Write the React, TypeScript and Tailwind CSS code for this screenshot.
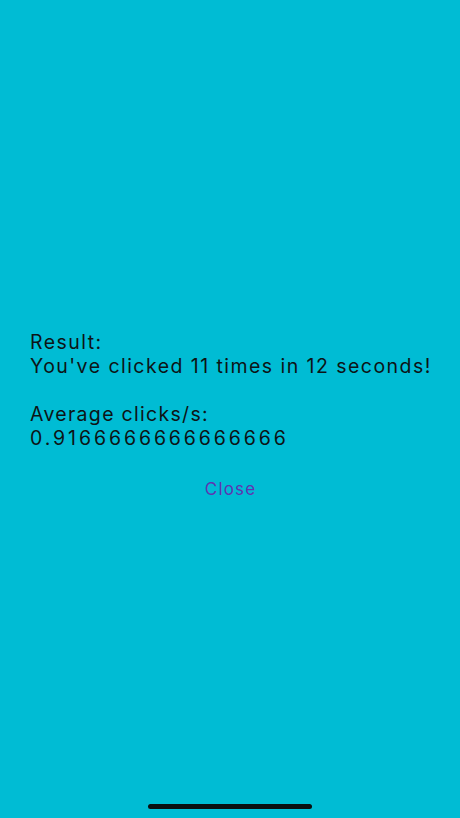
export default function App() {
  return (
    <div
      className="relative flex h-[818px] w-[460px] flex-col bg-[#00bcd4] text-[#0d1416]"
      style={{ fontFamily: "Inter, 'Liberation Sans', sans-serif" }}
    >
      <div className="pl-[30px] pt-[330px] text-[19.5px] leading-[24px] tracking-[1.45px]">
        <div>Result:</div>
        <div>You've clicked 11 times in 12 seconds!</div>
        <div className="h-[24px]" />
        <div className="tracking-[1.3px]">Average clicks/s:</div>
        <div className="tracking-[2.9px]">0.9166666666666666</div>
      </div>
      <div className="mt-[28px] flex justify-center">
        <button className="pl-[1.2px] text-[17px] leading-[22px] tracking-[1.2px] text-[#5e35b1]">Close</button>
      </div>
      <div className="absolute bottom-[9px] left-1/2 h-[5px] w-[164px] -translate-x-1/2 rounded-full bg-[#0a0f10]" />
    </div>
  );
}
